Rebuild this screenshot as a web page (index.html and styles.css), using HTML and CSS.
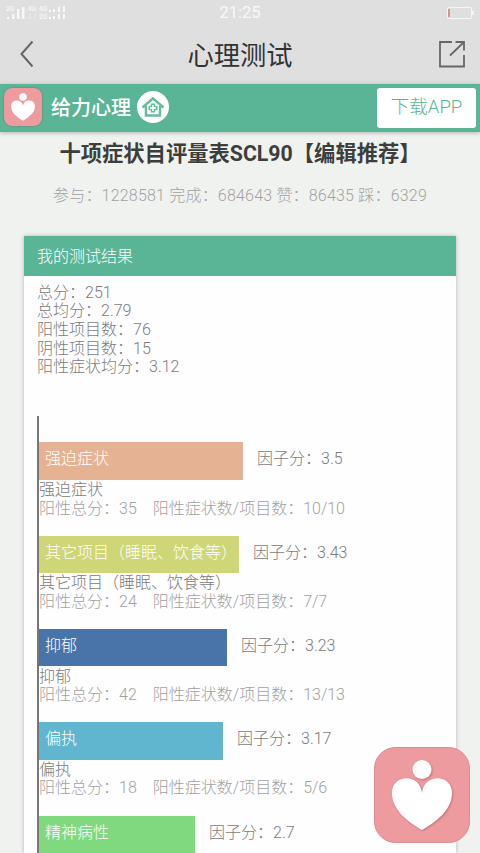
FILE: index.html
```
<!DOCTYPE html>
<html lang="zh-CN">
    <head>
        <meta charset="utf-8">
        <title>心理测试</title>
        <link rel="stylesheet" href="styles.css">
    </head>

    <body>
        <!-- 状态栏 -->
        <div class="status">
            <svg class="signal" width="66" height="18" viewBox="0 0 66 18">
                <g fill="#f8f8f8">
                    <text x="0" y="7">2G</text>
                    <rect x="1" y="13" width="2" height="2"/>
                    <rect x="6" y="10" width="2.5" height="5"/>
                    <rect x="11" y="5" width="2.5" height="10"/>
                    <rect x="16" y="3" width="2.5" height="12"/>
                    <text x="22" y="7">4G</text>
                    <text x="33" y="7">4G</text>
                    <text x="33" y="15">2G</text>
                    <rect x="43" y="6" width="2" height="2"/>
                    <rect x="47" y="5" width="2" height="3"/>
                    <rect x="52" y="3" width="2" height="5"/>
                    <rect x="57" y="2" width="2" height="6"/>
                    <rect x="43" y="13" width="2" height="2"/>
                    <rect x="47" y="12" width="2" height="3"/>
                    <rect x="52" y="10" width="2" height="5"/>
                    <rect x="57" y="10" width="2" height="5"/>
                </g>
                <path d="M24 10v5M22.500 13.500L24 15l1.500-1.500M29 15v-5M27.500 11.500L29 10l1.500 1.500" fill="none" stroke="#ececec"/>
            </svg>
            <span class="time">21:25</span>
            <svg class="battery" width="28" height="12" viewBox="0 0 28 12">
                <rect x=".5" y=".5" width="24" height="11" rx="1" fill="none" stroke="#f6f6f6"/>
                <rect x="25" y="4" width="2" height="4" fill="#f6f6f6"/>
                <rect x="1.500" y="2" width="1" height="8" fill="#d0453f"/>
            </svg>
        </div>

        <!-- 导航栏 -->
        <div class="navbar">
            <svg width="14" height="28" viewBox="0 0 14 28">
                <path d="M12.500 1.500L1.500 14l11 12.500" fill="none" stroke="#666" stroke-width="2"/>
            </svg>
            <h1>心理测试</h1>
            <svg width="28" height="28" viewBox="0 0 28 28">
                <path d="M14 2H2v24.500h24V15M12 15.500L26 2M17.500 2H26v8.500" fill="none" stroke="#6a6668" stroke-width="1.800"/>
            </svg>
        </div>

        <div class="banner">
            <svg class="logo" width="38" height="38" viewBox="0 0 96 96">
                <rect width="96" height="96" rx="20" fill="#ee9ba0"/>
                <circle cx="48" cy="23" r="9.500" fill="#fff"/>
                <path d="M48 46C47 27 18 26 18 46C18 63 32 72 48 83C64 72 78 63 78 46C78 26 49 27 48 46Z" fill="#fff"/>
            </svg>
            <span class="brand">给力心理</span>
            <svg class="home" width="32" height="32" viewBox="0 0 32 32">
                <circle cx="16" cy="16" r="16" fill="#fff"/>
                <path d="M5.500 16.500L16 7.500l10.500 9M9 15v9.500h14V15" fill="none" stroke="#6bbc9f" stroke-width="2.500"/>
                <path d="M16 12.500v9M11.500 17h9" stroke="#6bbc9f" stroke-width="4.500"/>
                <path d="M16 14v6M13 17h6" stroke="#fff" stroke-width="1.500"/>
            </svg>
            <a class="download">下载APP</a>
        </div>

        <h2>十项症状自评量表SCL90【编辑推荐】</h2>
        <p class="count">参与：1228581 完成：684643 赞：86435 踩：6329</p>

        <div class="card">
            <div class="card-title">我的测试结果</div>
            <div class="card-body">
                <div class="total">
                    总分：251<br>
                    总均分：2.79<br>
                    阳性项目数：76<br>
                    阴性项目数：15<br>
                    阳性症状均分：3.12
                </div>

                <!-- 因子分柱状图 -->
                <div class="chart">
                    <div class="item">
                        <div class="line"><span class="bar orange" style="width:204px">强迫症状</span><span>因子分：3.5</span></div>
                        <p>强迫症状</p>
                        <p class="detail"><span>阳性总分：35</span><span>阳性症状数/项目数：10/10</span></p>
                    </div>
                    <div class="item">
                        <div class="line"><span class="bar lime" style="width:200px">其它项目（睡眠、饮食等）</span><span>因子分：3.43</span></div>
                        <p>其它项目（睡眠、饮食等）</p>
                        <p class="detail"><span>阳性总分：24</span><span>阳性症状数/项目数：7/7</span></p>
                    </div>
                    <div class="item">
                        <div class="line"><span class="bar blue" style="width:188px">抑郁</span><span>因子分：3.23</span></div>
                        <p>抑郁</p>
                        <p class="detail"><span>阳性总分：42</span><span>阳性症状数/项目数：13/13</span></p>
                    </div>
                    <div class="item">
                        <div class="line"><span class="bar cyan" style="width:184px">偏执</span><span>因子分：3.17</span></div>
                        <p>偏执</p>
                        <p class="detail"><span>阳性总分：18</span><span>阳性症状数/项目数：5/6</span></p>
                    </div>
                    <div class="item">
                        <div class="line"><span class="bar green" style="width:156px">精神病性</span><span>因子分：2.7</span></div>
                    </div>
                </div>
            </div>
        </div>

        <!-- 右下角悬浮按钮 -->
        <svg class="float" width="96" height="96" viewBox="0 0 96 96">
            <rect x=".5" y=".5" width="95" height="95" rx="21" fill="#ee9ba0" stroke="#d98c91"/>
            <circle cx="48" cy="22.500" r="9.500"/>
            <path d="M48 46C46 26 18 27 18 46C18 63 34 75 48 83C62 75 78 63 78 46C78 27 50 26 48 46Z"/>
        </svg>
    </body>
</html>
```
FILE: styles.css
```
*{
    box-sizing: border-box;
}
html, body{
    height: 100%;
    overflow: hidden;
}
body{
    margin: 0;
    display: flex;
    flex-direction: column;
    background-color: #f0f2f0;
    color: #7c7c7c;
    font-family: Roboto, "Noto Sans CJK SC", sans-serif;
    font-size: 16px;
    font-weight: 300;
    line-height: 18.66px;
}
h1, h2, p{
    margin: 0;
}
svg{
    display: block;
    flex: none;
}
.status{
    height: 26px;
    padding: 0 6px;
    display: grid;
    grid-template-columns: 1fr auto 1fr;
    align-items: center;
    background-color: #dfdfdf;
}
.signal{
    font-size: 6.5px;
    font-weight: 500;
}
.time{
    color: #f8f8f8;
    font-size: 16.5px;
    font-weight: 400;
}
.battery{
    justify-self: end;
    margin-right: -1px;
}
.navbar{
    height: 58px;
    padding: 0 14px 2px 20px;
    display: flex;
    align-items: center;
    justify-content: space-between;
    background-color: #dfdfdf;
}
.navbar h1{
    color: #333;
    font-size: 26.3px;
    font-weight: 400;
    line-height: 40px;
    padding-top: 4px;
    padding-left: 8px;
}
.banner{
    flex: none;
    height: 48px;
    padding: 0 4px;
    display: flex;
    align-items: center;
    background-color: #5ab596;
    box-shadow: 0 1px 4px rgba(0,0,0,.25);
}
.logo{
    border-radius: 8px;
    box-shadow: 0 0 1px 1px rgba(120,120,110,.4);
    margin-top: -3px;
}
.brand{
    margin: 0 6px 0 9px;
    color: #fff;
    font-size: 20px;
    font-weight: 500;
}
.home{
    margin-top: -2px;
}
.download{
    width: 99px;
    height: 40px;
    margin-left: auto;
    border-radius: 3px;
    background-color: #fff;
    color: #5ab596;
    font-size: 18.5px;
    line-height: 39px;
    text-align: center;
}
h2{
    margin-top: 8px;
    color: #3c3e3c;
    font-size: 21.3px;
    font-weight: 700;
    line-height: 28px;
    text-align: center;
    white-space: nowrap;
}
.count{
    margin-top: 19px;
    color: #a2a2a2;
    letter-spacing: .2px;
    text-align: center;
    white-space: nowrap;
}
.card{
    flex: 1;
    min-height: 0;
    margin: 30px 24px 0;
    overflow: hidden;
    background-color: #fefefe;
    box-shadow: 0 0 4px rgba(0,0,0,.25);
}
.card-title{
    height: 40px;
    padding-left: 13px;
    background-color: #5ab596;
    color: #fff;
    line-height: 41px;
}
.card-body{
    padding: 8px 13px 0;
}
.chart{
    height: 437px;
    margin-top: 39px;
    padding-top: 26.5px;
    overflow: hidden;
    border-left: 2px solid #777;
}
.item{
    height: 93.3px;
}
.line{
    height: 38.5px;
    display: flex;
    gap: 14px;
    line-height: 33px;
}
.bar{
    height: 37.3px;
    padding-left: 6px;
    color: #fff;
    white-space: nowrap;
}
.orange{
    background-color: #e6b294;
}
.lime{
    background-color: #ced678;
}
.blue{
    background-color: #4874a9;
}
.cyan{
    background-color: #60b5cf;
}
.green{
    background-color: #80d87f;
}
.detail{
    display: flex;
    gap: 16px;
    color: #a2a2a2;
}
.float{
    position: fixed;
    right: 10px;
    bottom: 10px;
    fill: #fff;
}
.float circle, .float path{
    filter: drop-shadow(1px 1px 1px rgba(130,60,65,.4));
}
```
